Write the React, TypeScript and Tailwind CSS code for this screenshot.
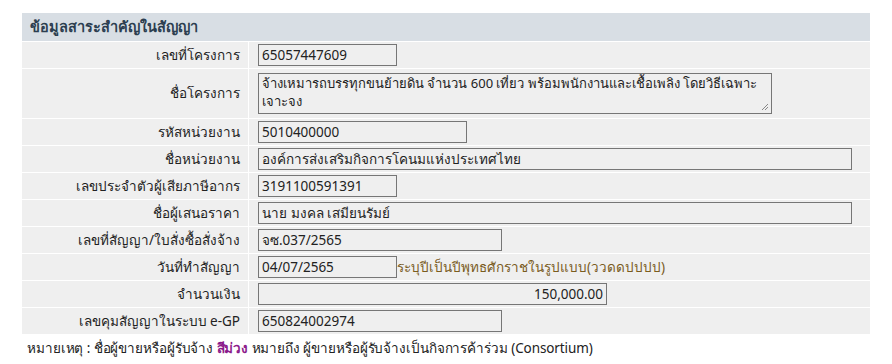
import React from "react";

const font = { fontFamily: '"Noto Sans", Tahoma, "DejaVu Sans", sans-serif' };

function Row({ label, h = "h-[27px]", children }: { label: string; h?: string; children: React.ReactNode }) {
  return (
    <div className={`grid grid-cols-[226px_1fr] gap-px border-t border-white ${h}`}>
      <div className="flex items-center justify-end bg-[#efefef] pr-[8px] text-[13.5px] text-[#222]">{label}</div>
      <div className="flex items-center bg-[#efefef] pl-[9px]">{children}</div>
    </div>
  );
}

function Box({ w, children, right }: { w: string; children: React.ReactNode; right?: boolean }) {
  return (
    <div className={`${w} h-[22px] border border-[#767676] bg-[#efefef] px-[3px] flex items-center text-[13.5px] text-[#222] ${right ? "justify-end" : ""}`}>
      {children}
    </div>
  );
}

export default function App() {
  return (
    <div className="bg-white w-[892px] h-[364px] pt-[13px] pl-[22px]" style={font}>
      <div className="w-[848px]">
        <div className="h-[28px] bg-[#d8dee4] flex items-center pl-[8px] text-[14.5px] font-bold text-[#2c3e50]">ข้อมูลสาระสำคัญในสัญญา</div>
        <Row label="เลขที่โครงการ"><Box w="w-[139px]">65057447609</Box></Row>
        <Row label="ชื่อโครงการ" h="h-[50px]">
          <div className="relative w-[514px] h-[41px] border border-[#767676] bg-[#efefef] px-[3px] text-[13px] leading-[18px] text-[#222] whitespace-nowrap overflow-hidden">
            จ้างเหมารถบรรทุกขนย้ายดิน จำนวน 600 เที่ยว พร้อมพนักงานและเชื้อเพลิง โดยวิธีเฉพาะ
            <br />
            เจาะจง
            <svg className="absolute right-[2px] bottom-[2px]" width="8" height="8" viewBox="0 0 8 8">
              <path d="M7 1 L1 7 M7 4 L4 7" stroke="#888" strokeWidth="1" />
            </svg>
          </div>
        </Row>
        <Row label="รหัสหน่วยงาน"><Box w="w-[209px]">5010400000</Box></Row>
        <Row label="ชื่อหน่วยงาน"><Box w="w-[594px]">องค์การส่งเสริมกิจการโคนมแห่งประเทศไทย</Box></Row>
        <Row label="เลขประจำตัวผู้เสียภาษีอากร"><Box w="w-[139px]">3191100591391</Box></Row>
        <Row label="ชื่อผู้เสนอราคา"><Box w="w-[594px]">นาย มงคล เสมียนรัมย์</Box></Row>
        <Row label="เลขที่สัญญา/ใบสั่งซื้อสั่งจ้าง"><Box w="w-[244px]">จซ.037/2565</Box></Row>
        <Row label="วันที่ทำสัญญา">
          <Box w="w-[139px]">04/07/2565</Box>
          <span className="text-[13.5px] text-[#7a5c1e]">ระบุปีเป็นปีพุทธศักราชในรูปแบบ(ววดดปปปป)</span>
        </Row>
        <Row label="จำนวนเงิน"><Box w="w-[349px]" right>150,000.00</Box></Row>
        <Row label="เลขคุมสัญญาในระบบ e-GP"><Box w="w-[244px]">650824002974</Box></Row>
      </div>
      <div className="mt-[4px] ml-[5px] text-[13.5px] tracking-[-0.1px] text-[#222]">
        หมายเหตุ : ชื่อผู้ขายหรือผู้รับจ้าง <span className="text-[#8b1a8b] font-bold">สีม่วง</span> หมายถึง ผู้ขายหรือผู้รับจ้างเป็นกิจการค้าร่วม (Consortium)
      </div>
    </div>
  );
}
